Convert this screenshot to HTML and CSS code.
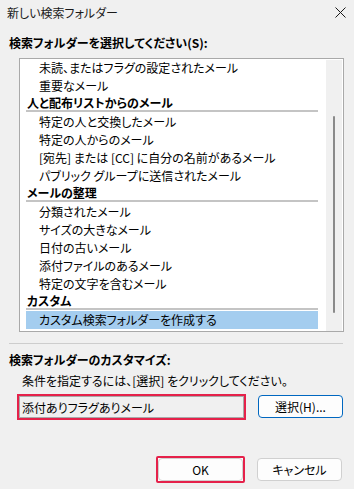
FILE: index.html
```html
<!DOCTYPE html>
<html lang="ja">
<head>
  <meta charset="UTF-8" />
  <title>新しい検索フォルダー</title>
  <link rel="stylesheet" href="styles.css">
</head>
<body>
  <div class="window">
    <div class="titlebar">
      <span class="title">新しい検索フォルダー</span>
      <svg class="close" width="11" height="11" viewBox="0 0 11 11">
        <path d="M0.5 0.5 L10.5 10.5 M10.5 0.5 L0.5 10.5" stroke="#1a1a1a" stroke-width="1" fill="none"/>
      </svg>
    </div>

    <div class="label pick-label">検索フォルダーを選択してください(S):</div>

    <div class="listbox">
      <ul class="list">
        <li class="item">未読、またはフラグの設定されたメール</li>
        <li class="item">重要なメール</li>
        <li class="group">人と配布リストからのメール</li>
        <li class="item">特定の人と交換したメール</li>
        <li class="item">特定の人からのメール</li>
        <li class="item">[宛先] または [CC] に自分の名前があるメール</li>
        <li class="item">パブリック グループに送信されたメール</li>
        <li class="group">メールの整理</li>
        <li class="item">分類されたメール</li>
        <li class="item">サイズの大きなメール</li>
        <li class="item">日付の古いメール</li>
        <li class="item">添付ファイルのあるメール</li>
        <li class="item">特定の文字を含むメール</li>
        <li class="group">カスタム</li>
        <li class="item selected">カスタム検索フォルダーを作成する</li>
      </ul>
      <div class="scrollbar">
        <div class="thumb"></div>
      </div>
    </div>

    <hr class="divider">

    <div class="label custom-label">検索フォルダーのカスタマイズ:</div>
    <div class="hint">条件を指定するには、[選択] をクリックしてください。</div>

    <div class="criteria-row">
      <div class="field marked">添付ありフラグありメール</div>
      <button class="btn btn-focus">選択(H)...</button>
    </div>

    <div class="actions">
      <div class="mark-box"><button class="btn">OK</button></div>
      <button class="btn">キャンセル</button>
    </div>
  </div>
</body>
</html>
```

FILE: styles.css
```css
body {
  margin: 0;
  background: #f0f0f0;
  font-family: "Noto Sans CJK JP", "Noto Sans", sans-serif;
  font-size: 12px;
  color: #000;
  font-feature-settings: "palt";
}

.window {
  width: 354px;
  height: 489px;
  display: flex;
  flex-direction: column;
}

.titlebar {
  height: 27px;
  display: flex;
  align-items: center;
  justify-content: space-between;
  padding: 0 8px 2px 7px;
  box-sizing: border-box;
}
.title {
  font-size: 12px;
  color: #1a1a1a;
}

.label {
  font-weight: bold;
  line-height: 16px;
  padding-left: 9px;
}
.pick-label {
  margin-top: 8px;
}

.listbox {
  margin: 7px 10px 0 19px;
  height: 274px;
  box-sizing: border-box;
  border: 1px solid #a9a9a9;
  background: #fff;
  display: flex;
  overflow: hidden;
}

.list {
  list-style: none;
  margin: 0;
  padding: 0 8px 0 6px;
  flex: 1;
}
.item {
  height: 18px;
  line-height: 18px;
  padding-left: 13px;
  white-space: nowrap;
}
.group {
  height: 15px;
  line-height: 15px;
  font-weight: bold;
  border-bottom: 2px solid #c4c4c4;
  margin-bottom: 1px;
  padding-left: 1px;
}
.selected {
  background: #a4cdef;
}

.scrollbar {
  width: 16px;
  margin: 1px 1px 0 0;
  background: #f0f0f0;
  position: relative;
}
.thumb {
  position: absolute;
  left: 7px;
  top: 56px;
  width: 2px;
  height: 197px;
  background: #8a8a8a;
  border-radius: 1px;
}

.divider {
  margin: 11px 11px 0 9px;
  border: none;
  border-top: 1px solid #cdcdcd;
}

.custom-label {
  margin-top: 8px;
}
.hint {
  line-height: 16px;
  margin-top: 5px;
  padding-left: 22px;
}

.criteria-row {
  display: flex;
  align-items: center;
  margin-top: 6px;
  padding: 0 11px 0 19px;
  gap: 14px;
}

.field {
  width: 225px;
  height: 22px;
  line-height: 22px;
  box-sizing: border-box;
  border: 1px solid #a9a9a9;
  background: #f0f0f0;
  padding-left: 2px;
}

.marked {
  outline: 2px solid #e5214a;
  outline-offset: 0;
}

.btn {
  width: 85px;
  height: 23px;
  box-sizing: border-box;
  border: 1px solid #d0d0d0;
  border-radius: 4px;
  background: #fdfdfd;
  font-family: inherit;
  font-size: 12px;
  font-feature-settings: "palt";
  color: #000;
  padding: 0;
  display: block;
}
.btn-focus {
  border-color: #0067c0;
}

.actions {
  display: flex;
  justify-content: flex-end;
  align-items: center;
  gap: 12px;
  margin-top: auto;
  padding: 0 12px 6px 0;
}
.mark-box {
  border: 2px solid #e5214a;
  border-radius: 2px;
  background: #fdfdfd;
}
```
